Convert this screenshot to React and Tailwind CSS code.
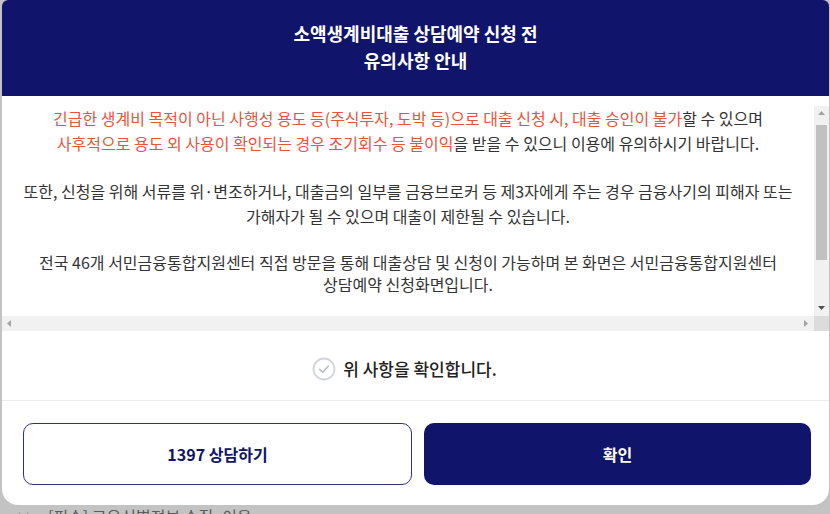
import { useState } from "react";

const NAVY = "#10146b";

const CheckCircle = ({ checked }) => (
  <svg width="24" height="24" viewBox="0 0 24 24" fill="none">
    <circle cx="12" cy="12" r="10.5" stroke={checked ? NAVY : "#d3d5de"} strokeWidth="1.8" />
    <path
      d="M7.6 12.2l3 3 5.6-6"
      stroke={checked ? NAVY : "#b9bdca"}
      strokeWidth="1.6"
      strokeLinecap="round"
      strokeLinejoin="round"
    />
  </svg>
);

// little scrollbar arrow, dir: up | down | left | right
const Arrow = ({ dir, color }) => {
  const pts = {
    up: "1,6 4.5,2 8,6",
    down: "1,2 4.5,6 8,2",
    left: "6,1 2,4.5 6,8",
    right: "2,1 6,4.5 2,8",
  };
  return (
    <svg width="9" height="9" viewBox="0 0 9 9">
      <polygon points={pts[dir]} fill={color} />
    </svg>
  );
};

const App = () => {
  const [checked, setChecked] = useState(false);

  return (
    <div className="h-screen w-full overflow-hidden bg-[#c3c3c3] font-['Noto_Sans_CJK_KR','Noto_Sans',sans-serif]">
      <div className="ml-[2px] w-[827px] overflow-hidden rounded-t-[6px] rounded-b-[16px] bg-white">
        {/* header */}
        <div className="flex h-[96px] flex-col items-center justify-center bg-[#10146b] pb-[3px] text-center text-[18px] font-bold leading-[27px] text-white">
          <p>소액생계비대출 상담예약 신청 전</p>
          <p>유의사항 안내</p>
        </div>

        {/* notice text with its scrollbars */}
        <div className="mt-[10px] flex flex-col">
          <div className="flex h-[210px]">
            <div className="flex-1 overflow-hidden">
              <div className="whitespace-nowrap text-center text-[16px] leading-[25px] text-[#333]">
                <p>
                  <span className="text-[#e9533e]">
                    긴급한 생계비 목적이 아닌 사행성 용도 등(주식투자, 도박 등)으로 대출 신청 시, 대출 승인이 불가
                  </span>
                  할 수 있으며
                  <br />
                  <span className="text-[#e9533e]">사후적으로 용도 외 사용이 확인되는 경우 조기회수 등 불이익</span>을
                  받을 수 있으니 이용에 유의하시기 바랍니다.
                </p>
                <p className="mt-[23px]">
                  또한, 신청을 위해 서류를 위·변조하거나, 대출금의 일부를 금융브로커 등 제3자에게 주는 경우
                  금융사기의 피해자 또는
                  <br />
                  가해자가 될 수 있으며 대출이 제한될 수 있습니다.
                </p>
                <p className="mt-[22px] leading-[22px]">
                  전국 46개 서민금융통합지원센터 직접 방문을 통해 대출상담 및 신청이 가능하며 본 화면은
                  서민금융통합지원센터
                  <br />
                  상담예약 신청화면입니다.
                </p>
              </div>
            </div>
            <div className="flex w-[15px] flex-col bg-[#f1f1f1]">
              <div className="flex h-[15px] items-center justify-center">
                <Arrow dir="up" color="#a3a3a3" />
              </div>
              <div className="flex-1 px-[2px] pb-[41px] pt-[4px]">
                <div className="h-full bg-[#c1c1c1]" />
              </div>
              <div className="flex h-[15px] items-center justify-center">
                <Arrow dir="down" color="#505050" />
              </div>
            </div>
          </div>
          <div className="flex h-[15px] bg-[#f1f1f1]">
            <div className="flex w-[15px] items-center justify-center">
              <Arrow dir="left" color="#a3a3a3" />
            </div>
            <div className="flex-1" />
            <div className="flex w-[15px] items-center justify-center">
              <Arrow dir="right" color="#a3a3a3" />
            </div>
            <div className="w-[15px] bg-[#dcdcdc]" />
          </div>
        </div>

        {/* confirm check */}
        <button
          onClick={() => setChecked(!checked)}
          className="flex h-[69px] w-full items-center justify-center gap-[7px] pr-[22px] pt-[6px] text-[17px] font-medium text-[#222]"
        >
          <CheckCircle checked={checked} />
          위 사항을 확인합니다.
        </button>

        <div className="h-px bg-[#ececec]" />

        {/* buttons */}
        <div className="flex gap-[12px] pb-[20px] pl-[21px] pr-[18px] pt-[22px]">
          <button className="h-[62px] flex-1 rounded-[10px] border border-[#2d3185] bg-white text-[16px] font-bold text-[#10146b]">
            1397 상담하기
          </button>
          <button className="h-[62px] flex-1 rounded-[10px] bg-[#10146b] text-[16px] font-bold text-white">
            확인
          </button>
        </div>
      </div>

      {/* page behind the dialog */}
      <div className="flex items-center gap-[18px] pl-[17px] pt-[1px] text-[16px] leading-[20px] text-[#5c5c5c]">
        <span className="text-[13px] text-[#9a9a9a]">∨</span>
        <span>[필수] 고유식별정보 수집·이용</span>
      </div>
    </div>
  );
};

export default App;
